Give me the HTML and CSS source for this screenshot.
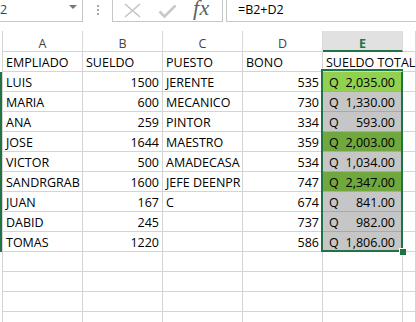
FILE: index.html
```html
<!DOCTYPE html>
<html lang="es">
<head>
    <meta charset="UTF-8">
    <meta name="viewport" content="width=device-width, initial-scale=1.0">
    <title>Planilla - Sueldos</title>
    <link rel="stylesheet" href="styles.css">
</head>
<body>
    <div class="formula-bar">
        <div class="name-box">
            <span class="name-text">E2</span>
            <span class="name-arrow"></span>
        </div>
        <div class="bar-dots"><i></i><i></i><i></i></div>
        <div class="fx-box">
            <svg class="icon-cancel" width="19" height="15" viewBox="0 0 19 15">
                <path d="M2 1 L17 14 M17 1 L2 14" stroke="#c4c4c4" stroke-width="1.6" fill="none"/>
            </svg>
            <svg class="icon-enter" width="19" height="14" viewBox="0 0 19 14">
                <path d="M1.5 7.5 L6.5 12.5 L17.5 1.5" stroke="#c8c8c8" stroke-width="2.6" fill="none"/>
            </svg>
            <span class="fx">fx</span>
        </div>
        <div class="formula-input">=B2+D2</div>
    </div>

    <div class="sheet">
        <div class="grid">
            <!-- column headers -->
            <div class="stub"></div>
            <div class="col-head">A</div>
            <div class="col-head">B</div>
            <div class="col-head">C</div>
            <div class="col-head">D</div>
            <div class="col-head active">E</div>
            <div class="col-head"></div>

            <!-- row 1 -->
            <div class="stub"></div>
            <div class="cell">EMPLIADO</div>
            <div class="cell">SUELDO</div>
            <div class="cell">PUESTO</div>
            <div class="cell">BONO</div>
            <div class="cell spill">SUELDO TOTAL</div>
            <div class="cell"></div>

            <div class="stub sel"></div>
            <div class="cell">LUIS</div>
            <div class="cell num">1500</div>
            <div class="cell">JERENTE</div>
            <div class="cell num">535</div>
            <div class="cell money lime"><span>Q</span><span>2,035.00</span></div>
            <div class="cell"></div>

            <div class="stub sel"></div>
            <div class="cell">MARIA</div>
            <div class="cell num">600</div>
            <div class="cell">MECANICO</div>
            <div class="cell num">730</div>
            <div class="cell money grey"><span>Q</span><span>1,330.00</span></div>
            <div class="cell"></div>

            <div class="stub sel"></div>
            <div class="cell">ANA</div>
            <div class="cell num">259</div>
            <div class="cell">PINTOR</div>
            <div class="cell num">334</div>
            <div class="cell money grey"><span>Q</span><span>593.00</span></div>
            <div class="cell"></div>

            <div class="stub sel"></div>
            <div class="cell">JOSE</div>
            <div class="cell num">1644</div>
            <div class="cell">MAESTRO</div>
            <div class="cell num">359</div>
            <div class="cell money green"><span>Q</span><span>2,003.00</span></div>
            <div class="cell"></div>

            <div class="stub sel"></div>
            <div class="cell">VICTOR</div>
            <div class="cell num">500</div>
            <div class="cell">AMADECASA</div>
            <div class="cell num">534</div>
            <div class="cell money grey"><span>Q</span><span>1,034.00</span></div>
            <div class="cell"></div>

            <div class="stub sel"></div>
            <div class="cell">SANDRGRAB</div>
            <div class="cell num">1600</div>
            <div class="cell">JEFE DEENPR</div>
            <div class="cell num">747</div>
            <div class="cell money green"><span>Q</span><span>2,347.00</span></div>
            <div class="cell"></div>

            <div class="stub sel"></div>
            <div class="cell">JUAN</div>
            <div class="cell num">167</div>
            <div class="cell">C</div>
            <div class="cell num">674</div>
            <div class="cell money grey"><span>Q</span><span>841.00</span></div>
            <div class="cell"></div>

            <div class="stub sel"></div>
            <div class="cell">DABID</div>
            <div class="cell num">245</div>
            <div class="cell"></div>
            <div class="cell num">737</div>
            <div class="cell money grey"><span>Q</span><span>982.00</span></div>
            <div class="cell"></div>

            <div class="stub sel"></div>
            <div class="cell">TOMAS</div>
            <div class="cell num">1220</div>
            <div class="cell"></div>
            <div class="cell num">586</div>
            <div class="cell money grey"><span>Q</span><span>1,806.00</span></div>
            <div class="cell"></div>

            <!-- empty rows -->
            <div class="stub"></div><div class="cell"></div><div class="cell"></div><div class="cell"></div><div class="cell"></div><div class="cell"></div><div class="cell"></div>
            <div class="stub"></div><div class="cell"></div><div class="cell"></div><div class="cell"></div><div class="cell"></div><div class="cell"></div><div class="cell"></div>
            <div class="stub"></div><div class="cell"></div><div class="cell"></div><div class="cell"></div><div class="cell"></div><div class="cell"></div><div class="cell"></div>
            <div class="stub"></div><div class="cell"></div><div class="cell"></div><div class="cell"></div><div class="cell"></div><div class="cell"></div><div class="cell"></div>
        </div>

        <div class="selection"><span class="fill-handle"></span></div>
    </div>
</body>
</html>
```

FILE: styles.css
```css
* {
    margin: 0;
    padding: 0;
    box-sizing: border-box;
}

body {
    width: 416px;
    height: 322px;
    overflow: hidden;
    background: #fff;
    font-family: 'Open Sans', 'Liberation Sans', sans-serif;
    font-size: 12.5px;
    line-height: 15px;
    color: #000;
}

/* formula bar */
.formula-bar {
    display: flex;
    height: 22px;
}

.name-box {
    width: 100px;
    margin-left: -17px;
    display: flex;
    align-items: center;
    justify-content: space-between;
    padding: 0 5px 2px 9px;
    border: 1px solid #c6c6c6;
    border-top: none;
    color: #1f3f6e;
}

.name-arrow {
    width: 0;
    height: 0;
    border-left: 4px solid transparent;
    border-right: 4px solid transparent;
    border-top: 4px solid #777;
    margin-top: -5px;
}

.bar-dots {
    margin-left: 14px;
    width: 2px;
    display: flex;
    flex-direction: column;
    gap: 2px;
    padding-top: 5px;
}

.bar-dots i {
    width: 2px;
    height: 2px;
    background: #a6a6a6;
}

.fx-box {
    margin-left: 13px;
    width: 111px;
    display: flex;
    align-items: flex-start;
    border: 1px solid #c6c6c6;
    border-top: none;
}

.icon-cancel {
    margin: 3px 0 0 10px;
}

.icon-enter {
    margin: 4px 0 0 16px;
}

.fx {
    margin: -2px 0 0 16px;
    font-family: 'Liberation Serif', serif;
    font-style: italic;
    font-size: 22px;
    line-height: 20px;
    color: #5e5e5e;
    letter-spacing: 0.5px;
}

.formula-input {
    flex: 1;
    margin-left: 3px;
    padding: 2px 0 0 11px;
    border-left: 1px solid #c6c6c6;
    border-bottom: 1px solid #c6c6c6;
}

/* sheet */
.sheet {
    position: relative;
    margin-top: 9px;
}

.grid {
    display: grid;
    grid-template-columns: 3px repeat(5, 80px) 1fr;
    grid-template-rows: 21px;
    grid-auto-rows: 20px;
}

.stub {
    border-right: 1px solid #d4d4d4;
}

.stub.sel {
    background: #217346;
}

.col-head {
    text-align: center;
    color: #444;
    padding-top: 5px;
    border-right: 1px solid #d9d9d9;
    border-bottom: 1px solid #d4d4d4;
}

.col-head.active {
    background: #e1e1e1;
    color: #217346;
    font-weight: 700;
    border-bottom: 2px solid #217346;
}

.cell {
    display: flex;
    align-items: flex-end;
    padding: 0 3px 1px 3px;
    white-space: nowrap;
    overflow: hidden;
    border-right: 1px solid #d4d4d4;
    border-bottom: 1px solid #d4d4d4;
}

.cell.num {
    justify-content: flex-end;
}

.cell.spill {
    overflow: visible;
    border-right-color: transparent;
    position: relative;
    z-index: 1;
}

.cell.money {
    justify-content: space-between;
    padding: 0 7px 1px 6px;
    border-bottom-color: #a9a9a9;
}

.lime {
    background: #92d050;
}

.green {
    background: #70a83e;
}

.grey {
    background: #c6c6c6;
}

.selection {
    position: absolute;
    left: 321px;
    top: 38px;
    width: 82px;
    height: 183px;
    border: 2px solid #217346;
    pointer-events: none;
}

.fill-handle {
    position: absolute;
    right: -5px;
    bottom: -5px;
    width: 7px;
    height: 7px;
    background: #217346;
    border-left: 1px solid #fff;
    border-top: 1px solid #fff;
}
```
